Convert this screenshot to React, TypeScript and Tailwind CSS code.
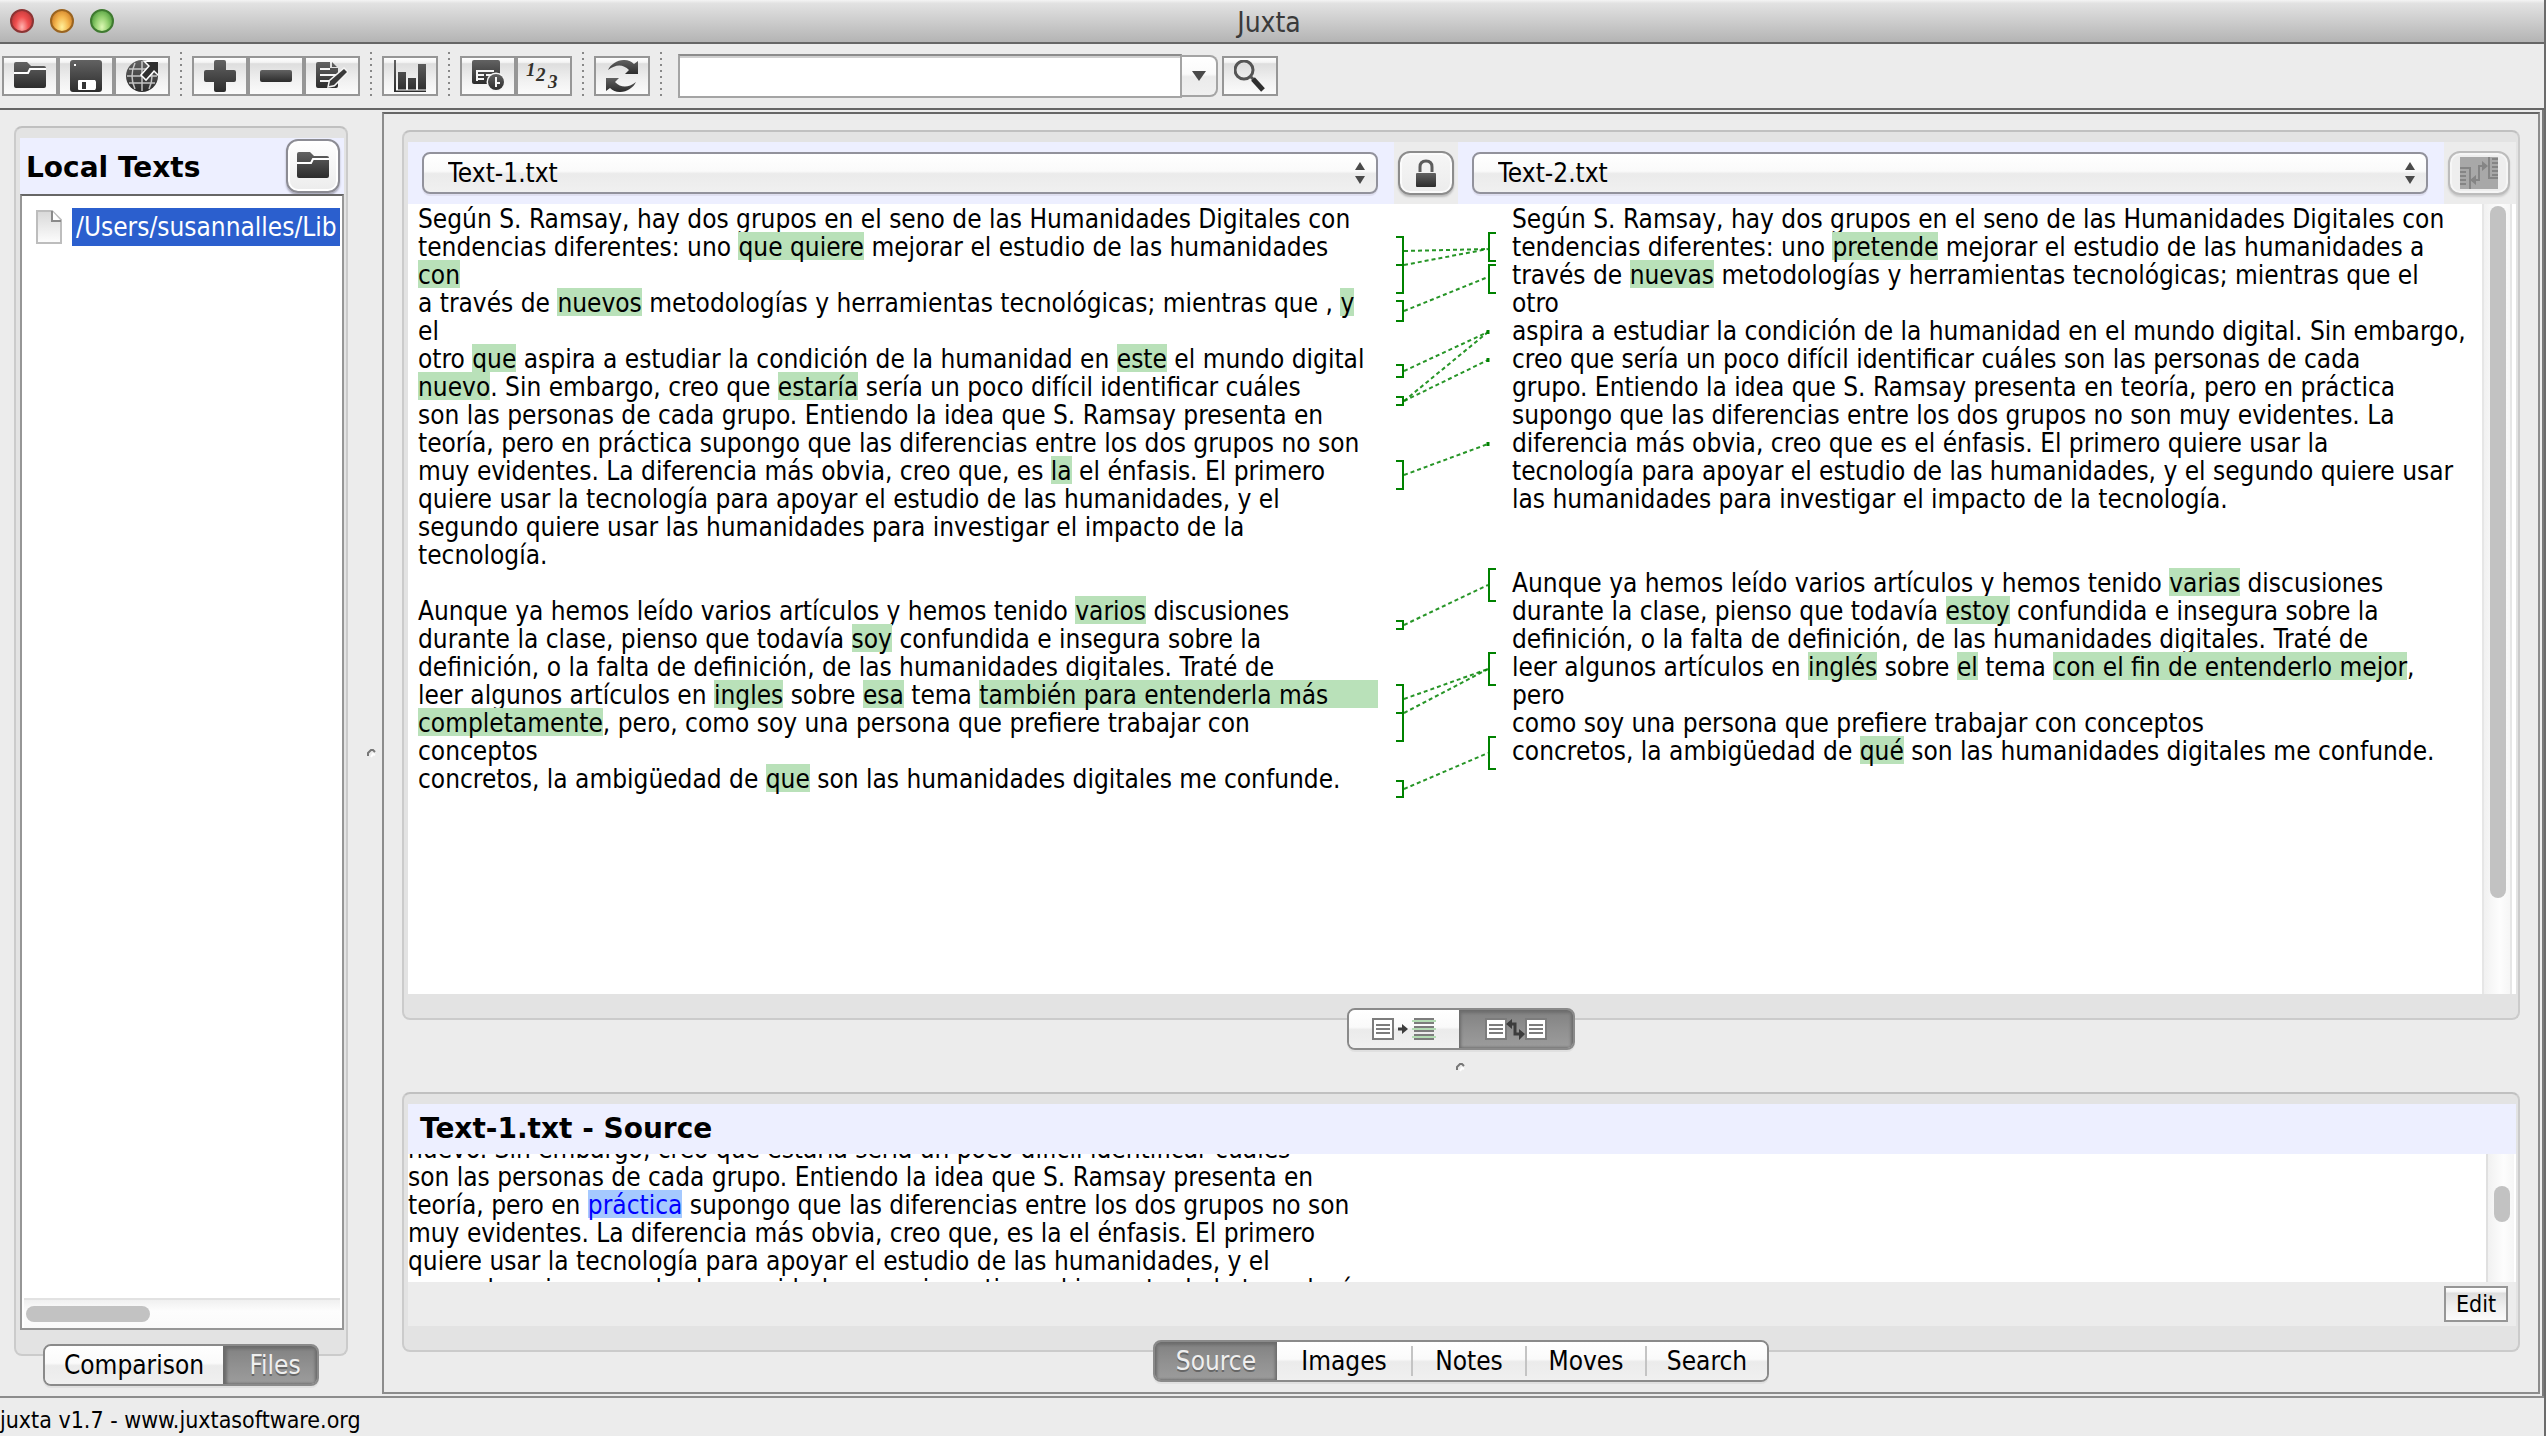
import { useState } from "react";
import type { ReactNode } from "react";

type Part = string | [string];
type Line = Part[];

const leftLines: Line[] = [
  ["Según S. Ramsay, hay dos grupos en el seno de las Humanidades Digitales con"],
  ["tendencias diferentes: uno ", ["que quiere"], " mejorar el estudio de las humanidades"],
  [["con"]],
  ["a través de ", ["nuevos"], " metodologías y herramientas tecnológicas; mientras que , ", ["y"]],
  ["el"],
  ["otro ", ["que"], " aspira a estudiar la condición de la humanidad en ", ["este"], " el mundo digital"],
  [["nuevo"], ". Sin embargo, creo que ", ["estaría"], " sería un poco difícil identificar cuáles"],
  ["son las personas de cada grupo. Entiendo la idea que S. Ramsay presenta en"],
  ["teoría, pero en práctica supongo que las diferencias entre los dos grupos no son"],
  ["muy evidentes. La diferencia más obvia, creo que, es ", ["la"], " el énfasis. El primero"],
  ["quiere usar la tecnología para apoyar el estudio de las humanidades, y el"],
  ["segundo quiere usar las humanidades para investigar el impacto de la"],
  ["tecnología."],
  [],
  ["Aunque ya hemos leído varios artículos y hemos tenido ", ["varios"], " discusiones"],
  ["durante la clase, pienso que todavía ", ["soy"], " confundida e insegura sobre la"],
  ["definición, o la falta de definición, de las humanidades digitales. Traté de"],
  ["leer algunos artículos en ", ["ingles"], " sobre ", ["esa"], " tema ", ["también para entenderla más"]],
  [["completamente"], ", pero, como soy una persona que prefiere trabajar con"],
  ["conceptos"],
  ["concretos, la ambigüedad de ", ["que"], " son las humanidades digitales me confunde."],
];

const rightLines: Line[] = [
  ["Según S. Ramsay, hay dos grupos en el seno de las Humanidades Digitales con"],
  ["tendencias diferentes: uno ", ["pretende"], " mejorar el estudio de las humanidades a"],
  ["través de ", ["nuevas"], " metodologías y herramientas tecnológicas; mientras que el"],
  ["otro"],
  ["aspira a estudiar la condición de la humanidad en el mundo digital. Sin embargo,"],
  ["creo que sería un poco difícil identificar cuáles son las personas de cada"],
  ["grupo. Entiendo la idea que S. Ramsay presenta en teoría, pero en práctica"],
  ["supongo que las diferencias entre los dos grupos no son muy evidentes. La"],
  ["diferencia más obvia, creo que es el énfasis. El primero quiere usar la"],
  ["tecnología para apoyar el estudio de las humanidades, y el segundo quiere usar"],
  ["las humanidades para investigar el impacto de la tecnología."],
  [],
  [],
  ["Aunque ya hemos leído varios artículos y hemos tenido ", ["varias"], " discusiones"],
  ["durante la clase, pienso que todavía ", ["estoy"], " confundida e insegura sobre la"],
  ["definición, o la falta de definición, de las humanidades digitales. Traté de"],
  ["leer algunos artículos en ", ["inglés"], " sobre ", ["el"], " tema ", ["con el fin de entenderlo mejor"], ","],
  ["pero"],
  ["como soy una persona que prefiere trabajar con conceptos"],
  ["concretos, la ambigüedad de ", ["qué"], " son las humanidades digitales me confunde."],
];

const sourceLines: Line[] = [
  ["nuevo. Sin embargo, creo que estaría sería un poco difícil identificar cuáles"],
  ["son las personas de cada grupo. Entiendo la idea que S. Ramsay presenta en"],
  ["teoría, pero en ", ["práctica"], " supongo que las diferencias entre los dos grupos no son"],
  ["muy evidentes. La diferencia más obvia, creo que, es la el énfasis. El primero"],
  ["quiere usar la tecnología para apoyar el estudio de las humanidades, y el"],
  ["segundo quiere usar las humanidades para investigar el impacto de la tecnología"],
];

const leftBrackets = [[33, 61], [61, 89], [97, 117], [161, 173], [193, 201], [257, 285], [417, 425], [481, 509], [509, 537], [577, 593]];
const rightBrackets = [[29, 57], [61, 89], [365, 397], [449, 481], [533, 565]];
const rightPoints = [128, 156, 240];
const links = [[47, 45], [61, 45], [107, 73], [167, 128], [197, 128], [197, 156], [271, 240], [421, 381], [495, 465], [509, 465], [585, 549]];

function Lines({ lines, mark, fillLine }: { lines: Line[]; mark: string; fillLine?: number }) {
  return (
    <>
      {lines.map((line, i) => (
        <p key={i} className="flex h-7 shrink-0 leading-[31px] whitespace-pre">
          {line.map((part, j) =>
            typeof part === "string" ? (
              <span key={j}>{part}</span>
            ) : (
              <mark key={j} className={i === fillLine && j === line.length - 1 ? `${mark} grow` : mark}>
                {part[0]}
              </mark>
            ),
          )}
        </p>
      ))}
    </>
  );
}

function Connectors() {
  return (
    <svg className="w-[134px] shrink-0" height="700" viewBox="0 0 134 700" fill="none" stroke="#008200" strokeWidth="2" aria-hidden="true">
      {leftBrackets.map(([a, b]) => (
        <path key={a} d={`M18 ${a}H25V${b}H18`} />
      ))}
      {rightBrackets.map(([a, b]) => (
        <path key={a} d={`M118 ${a}H111V${b}H118`} />
      ))}
      {rightPoints.map((y) => (
        <path key={y} d={`M110 ${y - 2}v4`} strokeWidth="3" />
      ))}
      {links.map(([a, b], i) => (
        <path key={i} d={`M26 ${a}L110 ${b}`} strokeDasharray="4 3" strokeOpacity="0.85" />
      ))}
    </svg>
  );
}

function Icon({ children, fill = "url(#ink)" }: { children: ReactNode; fill?: string }) {
  return (
    <svg width="32" height="32" viewBox="0 0 32 32" fill={fill} className="shrink-0" aria-hidden="true">
      {children}
    </svg>
  );
}

const FolderIcon = () => (
  <Icon>
    <path d="M0 4q0-2 2-2h11l4 4h13q2 0 2 2v18q0 2-2 2H2q-2 0-2-2z" />
    <path d="M0 13h14l2-4h16" stroke="#fff" strokeWidth="2" fill="none" />
  </Icon>
);
const SaveIcon = () => (
  <Icon>
    <rect width="32" height="32" rx="3" />
    <path d="M4 4h2v2H4zM9 20h16v10H9q-1 0-1-1v-8q0-1 1-1zM24 20q2 0 2 2v6q0 2-2 2z" fill="#fff" />
    <path d="M12 22h4v7h-4z" fill="#333" />
  </Icon>
);
const GlobeIcon = () => (
  <Icon>
    <circle cx="16" cy="16" r="16" />
    <path d="M3 9h22M1 16h30M3 23h26M16 1v30M9 3Q3 16 9 29M23 3q6 13 0 26" stroke="#e4e4e4" strokeWidth="1.5" fill="none" opacity=".8" />
    <path d="M20 2h12v12l-4-4L20 19l-4-4 8-9z" fill="#2f2f2f" stroke="#fff" strokeWidth="3" paintOrder="stroke" />
  </Icon>
);
const PlusIcon = () => (
  <Icon>
    <path d="M12 0h8q2 0 2 2v8h8q2 0 2 2v8q0 2-2 2h-8v8q0 2-2 2h-8q-2 0-2-2v-8H2q-2 0-2-2v-8q0-2 2-2h8V2q0-2 2-2z" />
  </Icon>
);
const MinusIcon = () => (
  <Icon>
    <rect y="10" width="32" height="12" rx="2" />
  </Icon>
);
const EditIcon = () => (
  <Icon>
    <path d="M2 2h12v6h8v18q0 2-2 2H2q-2 0-2-2V4q0-2 2-2zM16 2l5 5h-5z" />
    <path d="M4 9h10M4 15h16M4 21h12" stroke="#f4f4f4" strokeWidth="2" />
    <path d="M28 9l3 3-13 13-5 1 1-5z" fill="#3a3a3a" stroke="#f4f4f4" strokeWidth="3" paintOrder="stroke" />
  </Icon>
);
const ChartIcon = () => (
  <Icon>
    <path d="M0 0h2v30h2V12h8v18h2V18h8v12h2V4h8v28H0z" />
    <path d="M2 30h30" stroke="#fff" strokeWidth="1" />
  </Icon>
);
const TimeIcon = () => (
  <Icon>
    <rect width="28" height="24" rx="2" />
    <path d="M6 11h16M6 15h6M14 15h8M6 19h6M5 10v11" stroke="#f4f4f4" strokeWidth="2" fill="none" />
    <circle cx="24" cy="22" r="8" stroke="#f4f4f4" strokeWidth="3" paintOrder="stroke" />
    <path d="M24 17v6h4M24 23v4" stroke="#f4f4f4" strokeWidth="2" fill="none" />
  </Icon>
);
const NumbersIcon = () => (
  <svg width="36" height="32" viewBox="0 0 36 32" className="font-['Liberation_Serif',serif] text-[19px] font-bold italic" fill="#33302a" aria-hidden="true">
    <text x="0" y="16">1</text>
    <text x="10" y="21">2</text>
    <text x="22" y="28">3</text>
  </svg>
);
const RefreshIcon = () => (
  <Icon>
    <path d="M2 10C6 1 20-4 28 4l4-3v13H19l4-4C17 4 10 4 2 10z" />
    <path d="M30 22C26 31 12 36 4 28l-4 3V18h13l-4 4c6 6 13 6 21 0z" />
  </Icon>
);
const SearchIcon = () => (
  <Icon fill="none">
    <ellipse cx="10" cy="10" rx="9" ry="9" stroke="#555" strokeWidth="3" />
    <path d="M17 17l3 3" stroke="#555" strokeWidth="3" />
    <path d="M19 19l10 11" stroke="#2f2f2f" strokeWidth="5" />
  </Icon>
);
const LockIcon = () => (
  <svg width="22" height="30" viewBox="0 0 22 30" aria-hidden="true">
    <path d="M5 14V9q0-6 6-6t6 6v5" fill="none" stroke="#5d5d5d" strokeWidth="3" />
    <rect x="1" y="15" width="20" height="14" rx="1" fill="url(#ink)" />
  </svg>
);
const MovesIcon = () => (
  <svg width="38" height="32" viewBox="0 0 38 32" aria-hidden="true">
    <path d="M0 0h38v32H0z" fill="#a8a8a8" />
    <path d="M0 11h10v21M0 15h6M0 19h6M0 23h6M0 27h6M38 21H29V0M32 2h6M32 6h6M32 10h6M32 14h6M32 18h6M12 23h7V9h7" stroke="#858585" strokeWidth="2" fill="none" />
    <path d="M10 23l6-5v10zM28 9l-6-5v10z" fill="#858585" />
  </svg>
);

function Page({ x }: { x: number }) {
  return (
    <g transform={`translate(${x} 0)`}>
      <path d="M1 1h20v20H1z" fill="#fff" stroke="#7c7c7c" strokeWidth="2" />
      <path d="M4 7h14M4 11h14M4 15h14" stroke="#7c7c7c" strokeWidth="2" />
    </g>
  );
}
const HeatmapIcon = () => (
  <svg width="64" height="22" viewBox="0 0 64 22" aria-hidden="true">
    <Page x={0} />
    <path d="M26 11h6" stroke="#3c3c3c" strokeWidth="3" />
    <path d="M30 6l6 5-6 5z" fill="#3c3c3c" />
    {[1, 9, 17].map((y) => (
      <g key={y}>
        <path d={`M40 ${y + 2}h24`} stroke="#b4dcb4" strokeWidth="2" />
        <path d={`M42 ${y}h20M42 ${y + 4}h20`} stroke="#7c7c7c" strokeWidth="2" />
      </g>
    ))}
  </svg>
);
const SideBySideIcon = () => (
  <svg width="62" height="22" viewBox="0 0 62 22" aria-hidden="true">
    <Page x={0} />
    <Page x={40} />
    <path d="M26 6h4v10h5" stroke="#3c3c3c" strokeWidth="3" fill="none" />
    <path d="M21 6l6-5v10zM40 16l-6-5v11z" fill="#3c3c3c" />
  </svg>
);

const toolFace =
  "flex h-10 w-14 items-center justify-center border-2 border-[#969696] bg-[linear-gradient(#ffffff_0%,#f4f4f4_12%,#dedede_16%,#f0f0f0_60%,#fbfbfb_100%)]";

function Tool({ label, children }: { label: string; children: ReactNode }) {
  return (
    <button type="button" aria-label={label} className={toolFace}>
      {children}
    </button>
  );
}

const Dots = () => (
  <div className="h-11 w-0.5 self-start bg-[repeating-linear-gradient(#888888_0px,#888888_2px,transparent_2px,transparent_6px)]" />
);

function Picker({ label, value }: { label: string; value: string }) {
  return (
    <div className="relative flex-1">
      <select
        aria-label={label}
        defaultValue={value}
        className="h-[42px] w-full appearance-none rounded-lg border-2 border-[#92929c] bg-[linear-gradient(#ffffff_0%,#fafafa_45%,#ebebeb_52%,#f0f0f0_100%)] pl-6 shadow-[0_2px_0_#dfdff0]"
      >
        <option>Text-1.txt</option>
        <option>Text-2.txt</option>
      </select>
      <svg className="pointer-events-none absolute top-2.5 right-3 fill-[#4a4a4a]" width="12" height="22" viewBox="0 0 12 22" aria-hidden="true">
        <path d="M6 0l5 8H1zM6 22l5-8H1z" />
      </svg>
    </div>
  );
}

const segOn =
  "bg-[linear-gradient(#6a6a6a_0%,#858585_14%,#909090_50%,#9c9c9c_100%)] text-[#efefef] [text-shadow:0_2px_0_#666666] shadow-[inset_2px_0_3px_#6c6c6c,inset_-2px_0_3px_#6c6c6c]";
const segOff = "bg-[linear-gradient(#ffffff_0%,#fafafa_45%,#ebebeb_52%,#f0f0f0_100%)]";
const segBox = "flex h-[42px] overflow-hidden rounded-lg border-2 border-[#8a8a8a] shadow-[0_2px_0_#e0e0e0]";

const Grip = () => (
  <svg width="10" height="10" viewBox="0 0 10 10" fill="none" aria-hidden="true">
    <path d="M1 8V5l3-3h2l2 2" stroke="#777" strokeWidth="2" />
    <path d="M4 9l2-3 2 1" stroke="#fff" strokeWidth="2" />
  </svg>
);

const panel = "flex flex-col rounded-lg border-2 border-[#cbcbcb] border-t-[#c0c0c0] bg-[#e3e3e3] pt-2.5 pr-0.5 pb-6 pl-1";
const heading = "font-['DejaVu_Sans',sans-serif] text-[28px] font-bold";

export default function App() {
  const [tab, setTab] = useState("Source");
  const [side, setSide] = useState("Files");
  const [view, setView] = useState("compare");
  const tabs: [string, string][] = [
    ["Source", "w-[122px]"],
    ["Images", "w-[134px]"],
    ["Notes", "w-[114px]"],
    ["Moves", "w-[120px]"],
    ["Search", "w-[122px]"],
  ];

  return (
    <div className="h-screen overflow-hidden bg-[#6b6b6b] pr-0.5 font-['DejaVu_Sans_Condensed','DejaVu_Sans',sans-serif] text-[26px] leading-7 text-black">
      <svg width="0" height="0" className="absolute" aria-hidden="true">
        <linearGradient id="ink" x1="0" y1="0" x2="0" y2="1">
          <stop offset="0" stopColor="#626262" />
          <stop offset="1" stopColor="#2c2c2c" />
        </linearGradient>
      </svg>
      <div className="flex h-full flex-col bg-[#ececec]">
        <header className="flex h-11 shrink-0 items-center border-b-2 border-[#666666] bg-[linear-gradient(#f4f4f4_0%,#e2e2e2_8%,#b4b4b4_100%)] pr-4 pl-2.5">
          <div className="flex flex-1 gap-4">
            <button type="button" aria-label="Close" className="size-6 rounded-full border-2 border-[#8c3434] bg-[radial-gradient(ellipse_at_50%_80%,#ffb4b0_0%,#f05050_45%,#c83c3c_75%,#f8c8c8_100%)]" />
            <button type="button" aria-label="Minimize" className="size-6 rounded-full border-2 border-[#9a6420] bg-[radial-gradient(ellipse_at_50%_80%,#fff09a_0%,#f5b850_45%,#d88c30_75%,#fbe6c0_100%)]" />
            <button type="button" aria-label="Zoom" className="size-6 rounded-full border-2 border-[#3f7a30] bg-[radial-gradient(ellipse_at_50%_80%,#dcf8b4_0%,#94d070_45%,#5fa848_75%,#d8f0cc_100%)]" />
          </div>
          <h1 className="pt-1 text-[28px] text-[#3a3a3a]">Juxta</h1>
          <div className="flex-1" />
        </header>

        <div role="toolbar" aria-label="Main" className="flex h-[66px] shrink-0 items-center border-b-2 border-[#666666] pt-2 pb-2 pl-0.5">
          <div className="flex">
            <Tool label="Open"><FolderIcon /></Tool>
            <Tool label="Save"><SaveIcon /></Tool>
            <Tool label="Open from web"><GlobeIcon /></Tool>
          </div>
          <div className="w-2.5" /><Dots /><div className="w-2.5" />
          <div className="flex">
            <Tool label="Add"><PlusIcon /></Tool>
            <Tool label="Remove"><MinusIcon /></Tool>
            <Tool label="Edit text"><EditIcon /></Tool>
          </div>
          <div className="w-2.5" /><Dots /><div className="w-2.5" />
          <Tool label="Histogram"><ChartIcon /></Tool>
          <div className="w-2.5" /><Dots /><div className="w-2.5" />
          <div className="flex">
            <Tool label="Timestamps"><TimeIcon /></Tool>
            <Tool label="Line numbers"><NumbersIcon /></Tool>
          </div>
          <div className="w-2.5" /><Dots /><div className="w-2.5" />
          <Tool label="Refresh"><RefreshIcon /></Tool>
          <div className="w-2.5" /><Dots /><div className="w-4" />
          <input aria-label="Search text" className="h-11 w-[504px] border-2 border-[#a4a4a4] border-t-[#8c8c8c] bg-white px-2 outline-none shadow-[inset_0_2px_0_#d0d0d0]" />
          <button type="button" aria-label="Recent searches" className={`flex h-[42px] w-9 items-center justify-center rounded-r-lg border-2 border-l-0 border-[#a4a4a4] ${segOff}`}>
            <svg width="14" height="10" viewBox="0 0 14 10" aria-hidden="true"><path d="M0 0h14L7 10z" fill="#4a4a4a" /></svg>
          </button>
          <div className="w-1" />
          <Tool label="Search"><SearchIcon /></Tool>
        </div>

        <main className="flex min-h-0 flex-1 border-r-2 border-[#7a7a7a]">
          <aside className="flex w-[362px] shrink-0 flex-col pt-4 pr-3.5 pb-2.5 pl-3.5">
            <section className={`${panel} min-h-0 flex-1`}>
              <div className="flex h-14 shrink-0 items-center justify-between bg-[#edefff] pr-1 pl-1.5">
                <h2 className={`${heading} pt-1`}>Local Texts</h2>
                <button type="button" aria-label="Add local text" className="flex size-[54px] items-center justify-center rounded-xl border-2 border-[#8c8c94] bg-[linear-gradient(#ffffff,#ececec)] shadow-[0_2px_2px_#aaaabb,inset_0_0_0_2px_#ffffff]">
                  <FolderIcon />
                </button>
              </div>
              <div className="flex min-h-0 flex-1 flex-col border-2 border-[#969696] border-t-[#666666] bg-white">
                <div className="flex-1 pt-3 pr-0.5 pl-3.5">
                  <button type="button" className="flex w-full items-center gap-2.5 text-left">
                    <svg width="26" height="34" viewBox="0 0 26 34" className="shrink-0" aria-hidden="true">
                      <path d="M1 1h15l9 9v23H1z" fill="url(#sheet)" stroke="#bdbdbd" strokeWidth="2" />
                      <path d="M16 1v10h9" fill="#fff" stroke="#8a8a8a" strokeWidth="2" />
                      <linearGradient id="sheet" x1="0" y1="0" x2="0" y2="1">
                        <stop offset="0" stopColor="#d8d8d8" />
                        <stop offset="1" stopColor="#fdfdfd" />
                      </linearGradient>
                    </svg>
                    <span className="h-[38px] min-w-0 flex-1 overflow-hidden bg-[#2b5fce] pl-1 leading-[38px] whitespace-nowrap text-white">/Users/susannalles/Lib</span>
                  </button>
                </div>
                <div className="mx-0.5 h-[30px] border-t-2 border-[#e2e2e2] bg-[linear-gradient(#f0f0f0,#fdfdfd_40%,#fafafa)] px-0.5 pt-1.5">
                  <div className="h-4 w-[124px] rounded-full bg-[#c2c2c2]" />
                </div>
              </div>
            </section>
            <div className="z-10 -mt-3 flex justify-center">
              <div className={segBox}>
                {["Comparison", "Files"].map((t) => (
                  <button key={t} type="button" onClick={() => setSide(t)} className={`${t === "Files" ? "w-[94px] border-l-2 border-[#6c6c6c] pl-2" : "w-[178px]"} ${t === side ? segOn : segOff}`}>
                    {t}
                  </button>
                ))}
              </div>
            </div>
          </aside>
          <div className="flex w-5 items-center justify-center"><Grip /></div>

          <section className="mt-0.5 mr-0.5 mb-0.5 flex min-w-0 flex-1 flex-col border-2 border-[#8c8c8c] border-t-[#666666] px-[18px] pt-4 pb-2.5">
            <div className={`${panel} min-h-0 flex-1`}>
              <div className="flex h-[62px] shrink-0 items-center bg-[#edefff] pl-3.5">
                <Picker label="Left text" value="Text-1.txt" />
                <div className="mr-3.5 ml-4 flex h-full w-16 items-center justify-center bg-[#ececec]">
                  <button type="button" aria-label="Lock scrolling" className="flex h-11 w-14 items-center justify-center rounded-xl border-2 border-[#8c8c8c] bg-[linear-gradient(#f6f6f6,#ececec)] shadow-[0_2px_2px_#bbbbbb,inset_0_0_0_2px_#fbfbfb]">
                    <LockIcon />
                  </button>
                </div>
                <Picker label="Right text" value="Text-2.txt" />
                <div className="ml-4 flex h-full w-[72px] items-center bg-[#ececec] pl-1">
                  <button type="button" disabled aria-label="Mark move" className="flex h-11 w-[62px] items-center justify-center rounded-xl border-2 border-[#bcbcbc] bg-[#eeeeee] shadow-[0_2px_2px_#cccccc,inset_0_0_0_2px_#f6f6f6]">
                    <MovesIcon />
                  </button>
                </div>
              </div>
              <div className="flex min-h-0 flex-1 overflow-hidden bg-white">
                <div className="min-w-0 flex-1">
                  <div className="pl-2.5">
                    <Lines lines={leftLines} mark="bg-[#b9e1b9] text-black" fillLine={17} />
                  </div>
                </div>
                <Connectors />
                <div className="min-w-0 flex-1">
                  <Lines lines={rightLines} mark="bg-[#b9e1b9] text-black" />
                </div>
                <div className="w-[34px] pr-1">
                  <div className="h-full border-r-2 border-l-2 border-[#e6e6e6] bg-[linear-gradient(90deg,#f1f1f1,#fdfdfd_60%,#f6f6f6)] pt-0.5 pl-1.5">
                    <div className="h-[692px] w-4 rounded-full bg-[#c2c2c2]" />
                  </div>
                </div>
              </div>
            </div>

            <div className="z-10 -mt-3 flex justify-center">
              <div className={segBox}>
                <button type="button" aria-label="Collation view" onClick={() => setView("collation")} className={`flex w-[110px] items-center justify-center ${view === "collation" ? segOn : segOff}`}>
                  <HeatmapIcon />
                </button>
                <button type="button" aria-label="Comparison view" onClick={() => setView("compare")} className={`flex w-[114px] items-center justify-center ${view === "compare" ? segOn : segOff}`}>
                  <SideBySideIcon />
                </button>
              </div>
            </div>
            <div className="flex h-[42px] shrink-0 items-start justify-center pt-3"><Grip /></div>

            <div className={`${panel} shrink-0`}>
              <h2 className={`${heading} h-[50px] bg-[#edefff] pl-3 leading-[50px]`}>Text-1.txt - Source</h2>
              <div className="flex h-32 bg-white">
                <div className="flex min-w-0 flex-1 flex-col justify-center overflow-hidden">
                  <Lines lines={sourceLines} mark="bg-[#a5c9ff] text-[#0000ff]" />
                </div>
                <div className="mr-0.5 w-7 border-l-2 border-[#e0e0e0] bg-[linear-gradient(90deg,#f1f1f1,#fdfdfd_60%,#f6f6f6)] pt-8 pl-1.5">
                  <div className="h-9 w-4 rounded-full bg-[#c2c2c2]" />
                </div>
              </div>
              <div className="flex h-11 items-center justify-end bg-[#ececec] pr-2">
                <button type="button" className="h-9 w-16 border-2 border-[#969696] bg-[linear-gradient(#ffffff_0%,#f4f4f4_12%,#dedede_16%,#f0f0f0_60%,#fbfbfb_100%)] text-[23px] leading-8">Edit</button>
              </div>
            </div>
            <div className="z-10 -mt-3 flex justify-center">
              <div className={segBox}>
                {tabs.map(([t, w], i) => (
                  <button key={t} type="button" onClick={() => setTab(t)} className={`flex items-center ${w} ${t === tab ? segOn : segOff}`}>
                    {i > 1 && <span className="h-[30px] w-0.5 bg-[#c4c4c4]" />}
                    <span className="flex-1 text-center">{t}</span>
                  </button>
                ))}
              </div>
            </div>
          </section>
        </main>

        <footer className="h-10 shrink-0 border-t-2 border-[#8c8c8c] pt-2 text-[23px]">juxta v1.7 - www.juxtasoftware.org</footer>
      </div>
    </div>
  );
}
